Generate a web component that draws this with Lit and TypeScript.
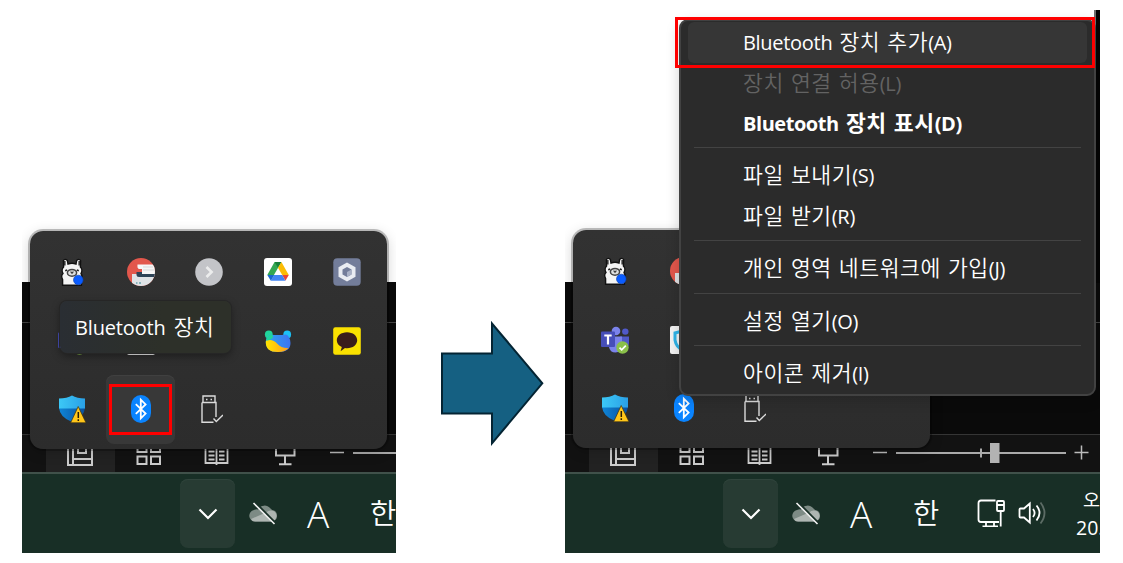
import { LitElement, html, svg, css, nothing } from "lit";
import { customElement, property } from "lit/decorators.js";

const icon = (body: unknown, w = 28, h = 28) =>
  html`<svg width=${w} height=${h} viewBox="0 0 ${w} ${h}" fill="none">${body}</svg>`;

const llama = icon(svg`
  <path d="M4.600 27.300V21.500C3.200 19 3.400 17 5 15.500C3.800 13.500 4 10.500 5.600 9L5.400 2.600Q7 .2 9.400 2.600L10 6Q14 4.600 18 6L18.600 2.600Q21 .2 22.600 2.600L22.400 9C24 10.500 24.200 13.500 23 15.500C24.300 17 24 20 23.400 21.500V27.300Z" fill="#f4f4f4" stroke="#111" stroke-width="1.400"/>
  <path d="M6.800 3V7.500M21.200 3V7.500" stroke="#333" stroke-width="1.600"/>
  <ellipse cx="14" cy="14.800" rx="4.600" ry="3.400" fill="#dedede" stroke="#444" stroke-width="1.500"/>
  <path d="M12.500 13.800L14 14.700L15.500 13.800M14 14.700V16" stroke="#333" stroke-width="1.100"/>
  <path d="M7.200 12.700L9.200 12M20.800 12.700L18.800 12" stroke="#222" stroke-width="1.600"/>
  <circle cx="20.300" cy="22" r="4.800" fill="#0a5cff" stroke="#0b3fae" stroke-width=".6"/>`);

const printer = icon(svg`
  <clipPath id="pc"><circle cx="14" cy="14" r="14"/></clipPath>
  <g clip-path="url(#pc)">
    <rect width="28" height="28" fill="#e2574c"/>
    <path d="M5 16H28V28H5Z" fill="#dfe3e6"/>
    <path d="M9.500 14H28V19H12Q9.500 19 9.500 16.500Z" fill="#2d4356"/>
    <path d="M10.500 6.500H28V16H15V11H12Q10 10.500 10.500 6.500Z" fill="#f6f6f6"/>
    <path d="M16 9H26M16 12H27" stroke="#d5d8da"/>
    <path d="M9 25H10.500M12 25H14" stroke="#2f8291"/>
  </g>`);

const circleArrow = icon(svg`
  <circle cx="14" cy="14" r="13.800" fill="#c3c4c8"/>
  <path d="M11.500 9L16.600 14L11.500 19" stroke="#eceded" stroke-width="2.600"/>`);

const drive = icon(svg`
  <rect width="28" height="28" rx="3" fill="#fff"/>
  <path d="M10.600 4H17.400L7.200 21.800L3.400 16.800Z" fill="#34a853"/>
  <path d="M10.600 4H17.400L14 9.800Z" fill="#188038"/>
  <path d="M17.400 4L24.800 17H18.200L14 9.800Z" fill="#fbbc04"/>
  <path d="M18.200 17H24.800L21.400 22.700Z" fill="#ea4335"/>
  <path d="M10 17H18.200L21.400 22.700H6.800Z" fill="#4285f4"/>
  <path d="M10 17L6.800 22.700L3.400 17Z" fill="#1967d2"/>`);

const hexagon = icon(svg`
  <rect x=".3" y=".3" width="27.400" height="27.400" rx="4" fill="#737d9a"/>
  <path d="M14 4.500L22.500 9.200V18.800L14 23.500L5.500 18.800V9.200Z" fill="#e9ecf2"/>
  <path d="M14 9L18.500 11.500V16.500L14 19L9.500 16.500V11.500Z" fill="#737d9a"/>
  <path d="M14 14L18.500 11.500V16.500L14 19Z" fill="#a9b1c6"/>`);

const teams = icon(svg`
  <circle cx="15" cy="5" r="4.300" fill="#7b83eb"/><circle cx="24.300" cy="5.600" r="3.200" fill="#5059c9"/>
  <path d="M19 10.500H28V17Q28 22 23 22H19Z" fill="#5059c9"/>
  <path d="M8 10.500H21V20Q20 26.500 14.500 26.500Q9 26.500 8 21Z" fill="#7b83eb"/>
  <rect y="5.500" width="14" height="15.500" rx="1" fill="#464eb8"/>
  <path d="M3.300 9.500H10.700M7 9.500V18.500" stroke="#fff" stroke-width="2.200"/>
  <circle cx="21.500" cy="21.500" r="6.200" fill="#8ac04a"/>
  <path d="M18.500 21.600L20.700 23.800L24.800 19.600" stroke="#fff" stroke-width="1.700"/>`);

const whiteShield = icon(svg`
  <rect width="28" height="28" rx="2" fill="#f4f4f4"/>
  <path d="M14 4.500L23 7V14Q22 21.500 14 25Q6 21.500 5 14V7Z" stroke="#2fb4e8" stroke-width="3"/>`);

const greyDisc = icon(svg`<circle cx="14" cy="14" r="13" fill="#8d8f92"/>`);

const swirl = icon(svg`
  <defs>
    <linearGradient id="wy" x1="0" x2="1"><stop stop-color="#ffe600"/><stop offset="1" stop-color="#ff9d1c"/></linearGradient>
    <linearGradient id="wb" x1="0" x2="1"><stop stop-color="#2fa4f4"/><stop offset="1" stop-color="#3d74ee"/></linearGradient>
  </defs>
  <circle cx="4.800" cy="7.500" r="3.900" fill="#20d59a"/>
  <circle cx="23.200" cy="7.500" r="3.900" fill="#1cc0f5"/>
  <path d="M1.800 15Q2 9 6 7.500Q14 8.500 22 7.500Q26 9 26.500 16Q26.500 25 14 25Q2 25 1.800 15Z" fill="url(#wb)"/>
  <path d="M2 13.500Q9 11.500 13 16.500Q17.500 21.500 24.500 21Q21 25.300 13.500 25Q1.500 25 1.800 15Z" fill="url(#wy)"/>
  <path d="M2 13.500Q3 8 7 7.500Q10 8 8.500 11Q6 13.500 2 13.500Z" fill="#20d59a"/>`);

const talk = icon(svg`
  <rect x=".2" y=".2" width="27.600" height="27.600" rx="2.200" fill="#fae100"/>
  <path d="M14 5.300C20 5.300 24.200 8.900 24.200 13.300S20 21.300 14 21.300Q13 21.300 12 21.100L7.600 24.200L8.800 20C5.500 18.600 3.800 16.200 3.800 13.300C3.800 8.900 8 5.300 14 5.300Z" fill="#3a1d1b"/>`);

const defender = icon(svg`
  <defs>
    <linearGradient id="dt" x1="0" x2="1"><stop stop-color="#3cc8f6"/><stop offset="1" stop-color="#2aa0e6"/></linearGradient>
    <linearGradient id="db" x1="0" x2="1"><stop stop-color="#0f86d8"/><stop offset="1" stop-color="#0a4f9c"/></linearGradient>
  </defs>
  <path d="M1 13H27Q26 22.500 14 27Q2 22.500 1 13Z" fill="url(#db)"/>
  <path d="M1 3.500Q9 3.500 14 .5Q19 3.500 27 3.500V13.500H1Z" fill="url(#dt)"/>
  <path d="M20.200 11.500L28 27.800H12.600Z" fill="#ffc61a" stroke="#3a2e10" stroke-width=".7"/>
  <path d="M20.300 17V23M20.300 24.300V26" stroke="#2a1d05" stroke-width="1.500"/>`);

const bluetooth = icon(svg`
  <rect x="4" y="0" width="20" height="28" rx="10" fill="#0a84ff"/>
  <path d="M8.800 9.200L18.600 18.600L13.800 23.400V4.600L18.600 9.400L8.800 18.800" stroke="#fff" stroke-width="1.800"/>`);

const usb = icon(svg`
  <path d="M8 7.500V1H20V7.500M7 7.500H21V22M7 7.500V27.300H18.500M18.500 23.500L21.300 26.500L28 20" stroke="#dcdcdc" stroke-width="1.400"/>
  <path d="M11 4.500H12.500M15.500 4.500H17" stroke="#dcdcdc" stroke-width="1.500"/>`);

const trayIcons = [
  llama, printer, circleArrow, drive, hexagon,
  teams, whiteShield, greyDisc, swirl, talk,
  defender, bluetooth, usb,
];

/** Hidden-icons flyout of the notification area. */
@customElement("tray-flyout")
export class TrayFlyout extends LitElement {
  @property({ type: Number }) active = -1;
  static styles = css`
    :host {
      box-sizing: border-box;
      display: grid;
      grid-template-columns: repeat(5, 68.700px);
      grid-template-rows: repeat(3, 68.700px);
      width: 356.500px;
      height: 218px;
      padding: 6.700px 7.500px;
      border-radius: 13px;
      background: linear-gradient(#323232, #2c2c2c);
      box-shadow: 0 0 0 2px rgba(0, 0, 0, 0.24), 0 3px 14px rgba(0, 0, 0, 0.2);
    }
    .cell { display: grid; place-items: center; border-radius: 8px; }
    .active { background: #383838; box-shadow: inset 0 1px #404040; }
    svg { display: block; }
  `;
  render() {
    return trayIcons.map((g, i) => html`<div class="cell ${i === this.active ? "active" : ""}">${g}</div>`);
  }
}

/** Dark window with its status bar, above the taskbar. */
@customElement("desktop-strip")
export class DesktopStrip extends LitElement {
  @property({ type: Boolean }) clock = false;
  static styles = css`
    :host { display: flex; flex-direction: column; height: 271px; overflow: hidden; background: #0a0a0a; }
    .band { flex: none; height: 41px; border-bottom: 1px solid #444; box-sizing: border-box; }
    .pane { flex: none; height: 111px; }
    .status {
      flex: none; display: flex; align-items: center; box-sizing: border-box; height: 38px;
      border-top: 1px solid #353535; background: #121212; padding-left: 24px;
    }
    .view { flex: none; width: 68.600px; height: 100%; display: grid; justify-items: center; align-items: start; padding-top: 6px; box-sizing: border-box; }
    .view.on { background: #222; }
    .zoom { flex: none; margin: 0 0 2px 9.600px; }
    .taskbar {
      flex: none; display: flex; align-items: center; box-sizing: border-box; height: 81px; width: 620px;
      border-top: 2px solid #40514a; padding-left: 158px; background: #182f26; color: #fff;
    }
    .chevron { display: grid; place-items: center; width: 55px; height: 69px; border-radius: 8px; background: #273b33; box-shadow: inset 0 1px #30443c; }
    .cloud { margin: 0 0 1px 14px; }
    .latin, .hangul { flex: none; display: block; text-align: center; }
    .latin { width: 30px; margin-left: 26px; font: 350 37px/40px "Open Sans", sans-serif; }
    .hangul { width: 30px; margin: 0 0 4px 35px; font: 350 28.500px/40px "Noto Sans CJK KR", sans-serif; }
    .net { margin: 0 0 2px 36px; }
    .sound { margin: 0 0 2px 13px; }
    .clock {
      flex: none; margin-left: 28px; white-space: nowrap;
      font: 19.500px/28px "Open Sans", "Noto Sans CJK KR", sans-serif;
    }
    .time { padding-left: 7px; font-size: 18.500px; }
    svg { display: block; flex: none; }
  `;
  render() {
    return html`
      <div class="band"></div>
      <div class="pane"></div>
      <div class="status">
        <div class="view on">${icon(svg`<path d="M2 1V24H26V1M7 1V24M7 18H26M12 4V12H20V4" stroke="#ccc" stroke-width="2"/>`, 28, 26)}</div>
        <div class="view">${icon(svg`<path d="M2.500 3H11.500V11H2.500ZM16 3H25V11H16ZM2.500 15.500H11.500V23H2.500ZM16 15.500H25V23H16Z" stroke="#ccc" stroke-width="2"/>`, 28, 26)}</div>
        <div class="view">${icon(svg`<path d="M2.500 2V22H24.500V2M13.500 2V24M5.500 10.500H11.500M5.500 14.500H11.500M5.500 18.500H11.500M16 10.500H21.500M16 14.500H21.500M16 18.500H21.500" stroke="#ccc" stroke-width="1.800"/>`, 28, 26)}</div>
        <div class="view">${icon(svg`<path d="M4 2V14.500H22.500V2M13 15V23M7 23.200H19.500" stroke="#ccc" stroke-width="2"/>`, 28, 26)}</div>
        <div class="zoom">${icon(svg`
          <path d="M0 12.500H14M201.500 12.500H215.500M208.500 5.500V19.500" stroke="#bbb" stroke-width="1.500"/>
          <path d="M23 13H193M108 8.500V17.500" stroke="#aaa" stroke-width="2"/>
          <rect x="117" y="3" width="9.500" height="20" fill="#b2b2b2"/>`, 216, 26)}</div>
      </div>
      <div class="taskbar">
        <div class="chevron">${icon(svg`<path d="M5.500 9.500L14 18L22.500 9.500" stroke="#fff" stroke-width="2.200"/>`)}</div>
        <div class="cloud">${icon(svg`
          <path d="M6 22.500A5.800 5.800 0 0 1 5 11Q7.500 9.800 9 10.500A7.500 7.500 0 0 1 21.500 9.500Q23 10.500 23 11A5.800 5.800 0 0 1 23 22.500Z" fill="#7d8b85"/>
          <path d="M2 20L17 13.500Q21 10 25.500 12.500A5.800 5.800 0 0 1 23 22.500H6Q3 22.500 2 20Z" fill="#aeb6b2"/>
          <path d="M5.500 3.500L26.500 24.500" stroke="#182f26" stroke-width="3"/>
          <path d="M4.500 4L25.500 25" stroke="#f4f4f4" stroke-width="1.600"/>`)}</div>
        <div class="latin">A</div>
        <div class="hangul">한</div>
        <div class="net">${icon(svg`
          <path d="M18.500 1.500H4Q1.500 1.500 1.500 4V20.500Q1.500 23 4 23H22M9 23V27M17 23V27M5.500 27.300H21" stroke="#fff" stroke-width="1.800"/>
          <rect x="20" y="2" width="7" height="10" rx="1" stroke="#fff" stroke-width="1.800"/>
          <path d="M20 6H27M23.700 12V27.500" stroke="#fff" stroke-width="1.800"/>`)}</div>
        <div class="sound">${icon(svg`
          <path d="M1.500 10.500Q1.500 9.500 2.500 9.500H6L11.800 4.500V23.500L6 18.500H2.500Q1.500 18.500 1.500 17.500Z" stroke="#fff" stroke-width="1.800"/>
          <path d="M15 10Q18.200 14 15 18M18.500 6.500Q24.500 14 18.500 21.500" stroke="#fff" stroke-width="1.800"/>
          <path d="M22.500 3.500Q30.500 14 22.500 24.500" stroke="#5c6c65" stroke-width="1.800"/>`, 30, 28)}</div>
        ${this.clock ? html`<div class="clock"><div class="time">오</div><div class="date">20.</div></div>` : nothing}
      </div>`;
  }
}

type Entry = { runs: [string, string?][]; state?: "hover" | "off" | "bold" } | null;

const entries: Entry[] = [
  { runs: [["Bluetooth", "l"], [" 장치 추가"], ["(A)", "l"]], state: "hover" },
  { runs: [["장치 연결 허용"], ["(L)", "l"]], state: "off" },
  { runs: [["Bluetooth", "l"], [" 장치 표시"], ["(D)", "l"]], state: "bold" },
  null,
  { runs: [["파일 보내기"], ["(S)", "l"]] },
  { runs: [["파일 받기"], ["(R)", "l"]] },
  null,
  { runs: [["개인 영역 네트워크에 가입"], ["(J)", "l"]] },
  null,
  { runs: [["설정 열기"], ["(O)", "l"]] },
  null,
  { runs: [["아이콘 제거"], ["(I)", "l"]] },
];

@customElement("context-menu")
export class ContextMenu extends LitElement {
  static styles = css`
    :host {
      display: block; box-sizing: border-box; width: 416.500px; height: 377px; padding: 1.200px 7px 0 6.500px;
      border: 2px solid #424242; border-radius: 9px; background: #2b2b2b;
      box-shadow: 0 4px 14px rgba(0, 0, 0, 0.18);
    }
    .item {
      box-sizing: border-box; height: 40.400px; padding-left: 55.500px; border-radius: 6px;
      color: #fff; white-space: pre;
      font: 350 21.600px/38.400px "Noto Sans CJK KR", sans-serif; letter-spacing: 0.550px; word-spacing: 1.700px;
    }
    .l { font-family: "Open Sans", sans-serif; font-weight: 400; font-size: 20px; letter-spacing: -0.300px; }
    .hover { background: #363636; }
    .off { color: #636363; }
    .bold { font-weight: 700; }
    .bold .l { font-weight: 700; letter-spacing: -0.450px; }
    .sep { height: 12px; padding: 4px 6px 0; box-sizing: border-box; }
    .line { height: 1px; background: #434343; }
  `;
  render() {
    return entries.map((e) =>
      e
        ? html`<div class="item ${e.state ?? ""}">${e.runs.map(([t, c]) => html`<span class=${c ?? nothing}>${t}</span>`)}</div>`
        : html`<div class="sep"><div class="line"></div></div>`
    );
  }
}

@customElement("app-root")
export class AppRoot extends LitElement {
  static styles = css`
    :host { display: block; width: 1123px; height: 563px; background: #fff; overflow: hidden; }
    .page { display: flex; box-sizing: border-box; height: 563px; padding: 10px 0 0 22px; }
    .shot { position: relative; flex: none; display: flex; flex-direction: column; justify-content: flex-end; height: 543px; overflow: hidden; }
    .before { width: 374px; }
    .after { width: 535px; margin-left: 21px; }
    .arrow { flex: none; align-self: flex-start; margin: 311px 0 0 44px; }
    .arrow svg { display: block; }
    .flyout { position: absolute; left: 8px; top: 221px; }
    .after .flyout { top: 220px; }
    .tip {
      position: absolute; left: 38px; top: 291px; box-sizing: border-box; width: 171px; height: 52px;
      padding-left: 15px; border-radius: 7px; white-space: pre; color: #fff;
      background: linear-gradient(90deg, #2a2e33, #2d3029 60%, #2d3029);
      box-shadow: 0 0 0 1px #262626, 0 3px 8px rgba(0, 0, 0, 0.4);
      font: 350 21.500px/49px "Noto Sans CJK KR", sans-serif; letter-spacing: 0.300px; word-spacing: 3px;
    }
    .l { font-family: "Open Sans", sans-serif; font-weight: 400; font-size: 20px; letter-spacing: -0.150px; }
    .mark { position: absolute; box-sizing: border-box; border: 3px solid #fe0000; }
    .mark.bt { left: 87px; top: 374px; width: 63px; height: 51px; }
    .mark.add { left: 110px; top: 7px; width: 420px; height: 51px; }
    .edge { position: absolute; right: 0; top: 0; width: 4px; height: 273px; background: #050505; border-left: 2px solid #707070; }
    .menu { position: absolute; left: 114px; top: 9px; }
  `;
  render() {
    return html`
      <div class="page">
        <div class="shot before">
          <desktop-strip></desktop-strip>
          <tray-flyout class="flyout" .active=${11}></tray-flyout>
          <div class="tip"><span class="l">Bluetooth</span> 장치</div>
          <div class="mark bt"></div>
        </div>
        <div class="arrow">
          <svg width="104" height="125" viewBox="0 0 104 125">
            <path d="M2 32.500H52V2.500L102.300 62.300L52 122.300V92.500H2Z" fill="#156082" stroke="#042433" stroke-width="2"/>
          </svg>
        </div>
        <div class="shot after">
          <desktop-strip clock></desktop-strip>
          <tray-flyout class="flyout"></tray-flyout>
          <div class="edge"></div>
          <context-menu class="menu"></context-menu>
          <div class="mark add"></div>
        </div>
      </div>`;
  }
}
